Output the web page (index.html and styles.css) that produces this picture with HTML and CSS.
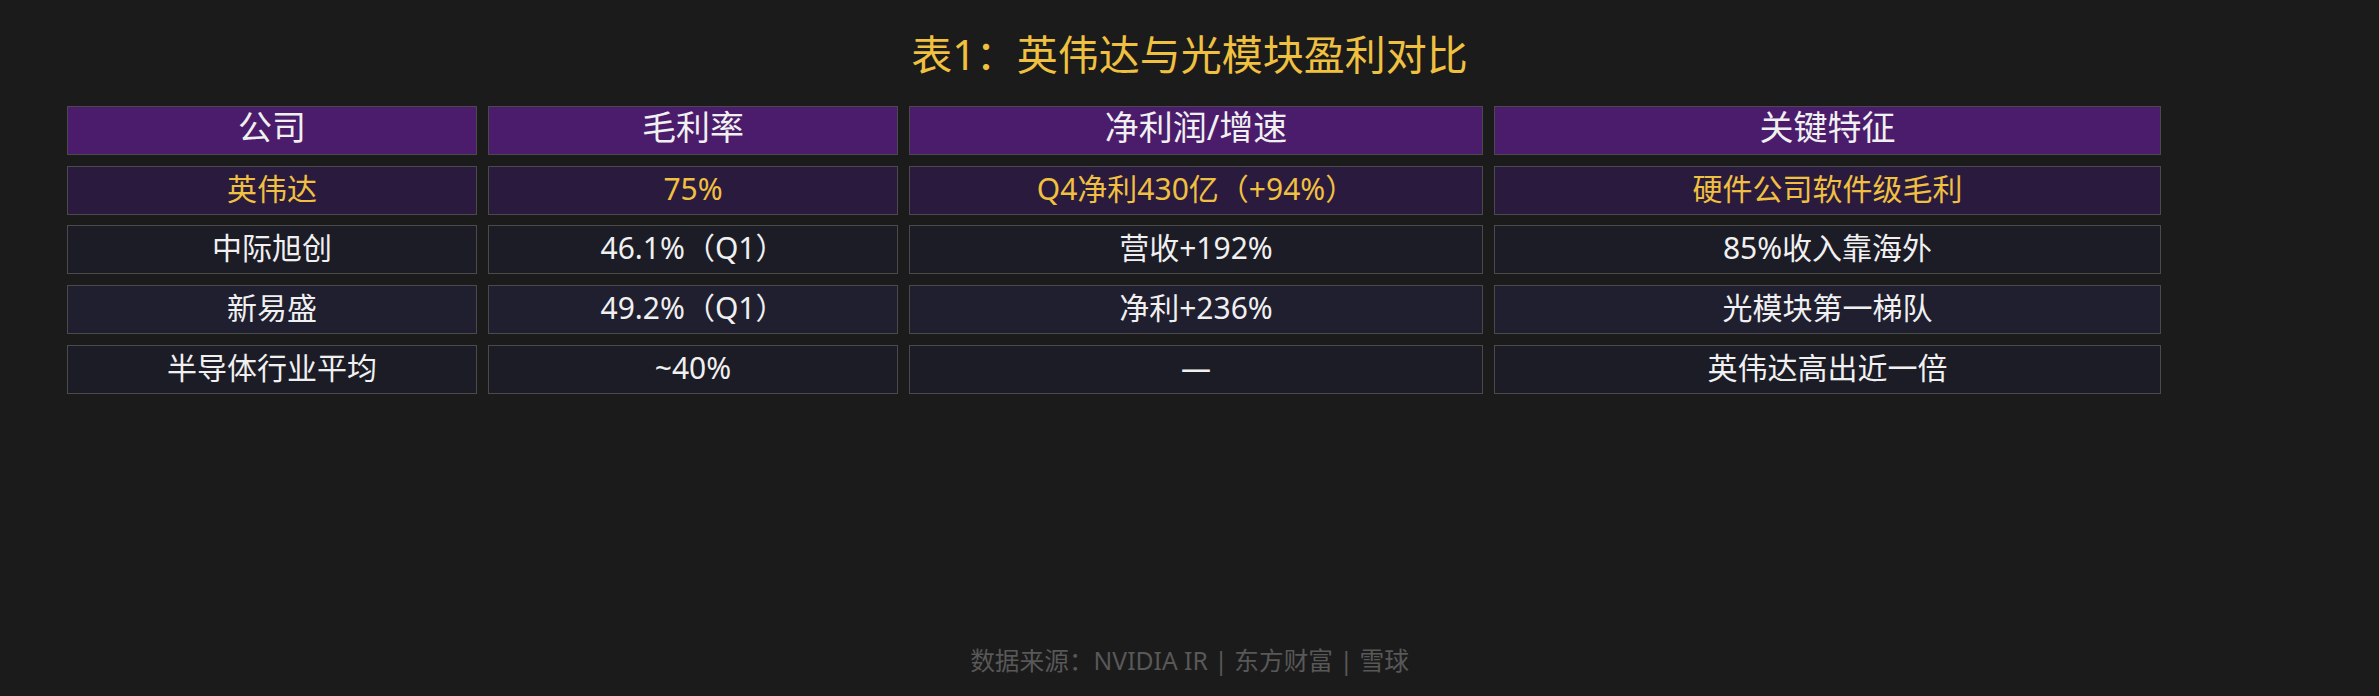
FILE: index.html
```html
<!DOCTYPE html>
<html lang="zh-CN">
<head>
<meta charset="utf-8">
<title>表1：英伟达与光模块盈利对比</title>
<link rel="stylesheet" href="styles.css">
</head>
<body>
<div class="title">表1：英伟达与光模块盈利对比</div>
<div class="table">
  <div class="cell head">公司</div>
  <div class="cell head">毛利率</div>
  <div class="cell head">净利润/增速</div>
  <div class="cell head">关键特征</div>

  <div class="cell hl">英伟达</div>
  <div class="cell hl">75%</div>
  <div class="cell hl">Q4净利430亿（+94%）</div>
  <div class="cell hl">硬件公司软件级毛利</div>

  <div class="cell odd">中际旭创</div>
  <div class="cell odd">46.1%（Q1）</div>
  <div class="cell odd">营收+192%</div>
  <div class="cell odd">85%收入靠海外</div>

  <div class="cell even">新易盛</div>
  <div class="cell even">49.2%（Q1）</div>
  <div class="cell even">净利+236%</div>
  <div class="cell even">光模块第一梯队</div>

  <div class="cell odd">半导体行业平均</div>
  <div class="cell odd">~40%</div>
  <div class="cell odd">—</div>
  <div class="cell odd">英伟达高出近一倍</div>
</div>
<div class="footer">数据来源：NVIDIA IR | 东方财富 | 雪球</div>
</body>
</html>
```

FILE: styles.css
```css
html, body {
  margin: 0;
  padding: 0;
}

body {
  background: #1b1b1b;
  font-family: "Noto Sans", "Noto Sans CJK SC", sans-serif;
  height: 696px;
  display: flex;
  flex-direction: column;
  overflow: hidden;
}

.title {
  margin-top: 29px;
  height: 50px;
  line-height: 50px;
  text-align: center;
  font-size: 41px;
  color: #f0c040;
}

.table {
  margin: 27px 0 0 67px;
  display: grid;
  grid-template-columns: 410px 410px 574px 667px;
  grid-auto-rows: 49px;
  column-gap: 11px;
  row-gap: 10.7px;
  width: max-content;
}

.cell {
  box-sizing: border-box;
  border: 1px solid #4a4a4a;
  display: flex;
  align-items: center;
  justify-content: center;
  font-size: 30px;
  line-height: 1;
  color: #f0f0f0;
  padding-bottom: 3px;
  white-space: nowrap;
}

.head {
  background: #4a1c6b;
  font-size: 34px;
  padding-bottom: 8px;
}

.hl {
  background: #2a1a3e;
  color: #f0c040;
}

.odd {
  background: #1c1c27;
}

.even {
  background: #201f30;
}

.footer {
  margin-top: auto;
  margin-bottom: 20px;
  text-align: center;
  font-size: 24.7px;
  line-height: 30px;
  color: #585858;
}
```
